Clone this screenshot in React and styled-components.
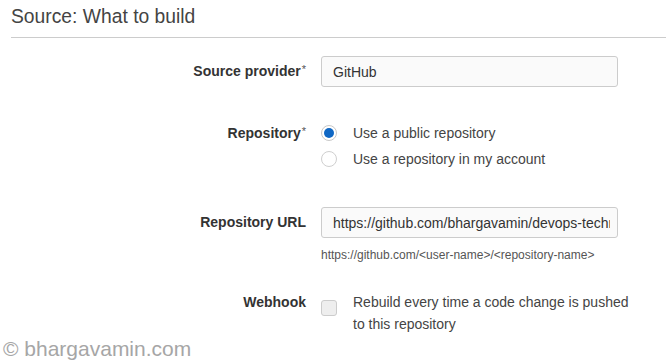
import React from "react";
import styled, { createGlobalStyle } from "styled-components";

const GlobalStyle = createGlobalStyle`
  html, body {
    margin: 0;
    padding: 0;
    background: #ffffff;
  }
  body {
    font-family: "Liberation Sans", Arial, sans-serif;
    color: #444444;
  }
`;

const Page = styled.div`
  position: relative;
  width: 666px;
  height: 361px;
  overflow: hidden;
  background: #ffffff;
`;

const Heading = styled.h2`
  margin: 0 0 0 11px;
  padding: 4px 0 8px;
  font-size: 19.3px;
  font-weight: normal;
  line-height: 25px;
  color: #444444;
  border-bottom: 1px solid #cccccc;
`;

const Row = styled.div`
  display: grid;
  grid-template-columns: 295px 1fr;
  column-gap: 15px;
  align-items: start;
  padding-left: 11px;
  margin-top: ${(p) => p.$top}px;
`;

const Label = styled.div`
  text-align: right;
  font-size: 14px;
  font-weight: bold;
  color: #333333;
  line-height: ${(p) => p.$lh}px;
  sup {
    font-size: 11px;
    font-weight: normal;
    color: #555555;
    vertical-align: top;
    position: relative;
    top: -2px;
    margin-left: 1px;
  }
`;

const Field = styled.div`
  display: flex;
  flex-direction: column;
`;

const TextInput = styled.input`
  box-sizing: border-box;
  width: 297px;
  height: 31px;
  padding: 0 7px 0 11px;
  border: 1px solid #cccccc;
  border-radius: 3px;
  background: #fafafa;
  font-family: "Liberation Sans", Arial, sans-serif;
  font-size: 14px;
  color: #333333;
  outline: none;
`;

const Hint = styled.div`
  margin-top: 10px;
  font-size: 12px;
  line-height: 14px;
  color: #555555;
`;

const Option = styled.label`
  display: flex;
  align-items: center;
  height: 26px;
  font-size: 14px;
  color: #444444;
`;

const Radio = styled.span`
  box-sizing: border-box;
  width: 16px;
  height: 16px;
  margin-right: 16px;
  border-radius: 50%;
  border: 1px solid ${(p) => (p.$checked ? "#c8c8c8" : "#cfcfcf")};
  background: #ffffff;
  display: flex;
  align-items: center;
  justify-content: center;
  &::after {
    content: "";
    width: 10px;
    height: 10px;
    border-radius: 50%;
    background: ${(p) => (p.$checked ? "#0f67c4" : "transparent")};
  }
`;

const CheckRow = styled.div`
  display: flex;
  align-items: flex-start;
`;

const Checkbox = styled.span`
  box-sizing: border-box;
  flex: none;
  width: 16px;
  height: 16px;
  margin-top: 9px;
  margin-right: 16px;
  border: 1px solid #cccccc;
  border-radius: 3px;
  background: #eeeeee;
`;

const CheckText = styled.div`
  width: 285px;
  font-size: 14px;
  line-height: 22px;
  color: #444444;
`;

const Watermark = styled.div`
  position: absolute;
  left: 3px;
  top: 337px;
  font-size: 21px;
  line-height: 24px;
  color: #a6a6a6;
`;

export default function App() {
  return (
    <Page>
      <GlobalStyle />
      <Heading>Source: What to build</Heading>

      <Row $top={18}>
        <Label $lh={31}>
          Source provider<sup>*</sup>
        </Label>
        <Field>
          <TextInput readOnly value="GitHub" />
        </Field>
      </Row>

      <Row $top={33}>
        <Label $lh={26}>
          Repository<sup>*</sup>
        </Label>
        <Field>
          <Option>
            <Radio $checked />
            Use a public repository
          </Option>
          <Option>
            <Radio />
            Use a repository in my account
          </Option>
        </Field>
      </Row>

      <Row $top={35}>
        <Label $lh={31}>Repository URL</Label>
        <Field>
          <TextInput
            readOnly
            value="https://github.com/bhargavamin/devops-techniques"
          />
          <Hint>https://github.com/&lt;user-name&gt;/&lt;repository-name&gt;</Hint>
        </Field>
      </Row>

      <Row $top={29}>
        <Label $lh={22}>Webhook</Label>
        <CheckRow>
          <Checkbox />
          <CheckText>
            Rebuild every time a code change is pushed to this repository
          </CheckText>
        </CheckRow>
      </Row>

      <Watermark>© bhargavamin.com</Watermark>
    </Page>
  );
}
